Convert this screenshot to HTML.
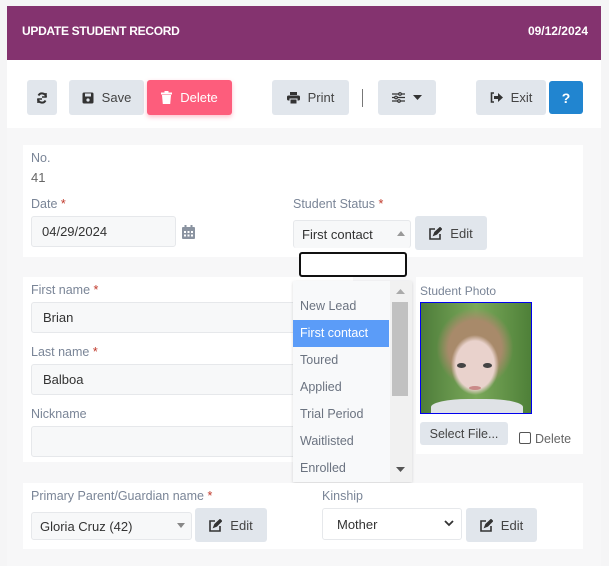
<!DOCTYPE html>
<html><head><style>
*{box-sizing:border-box;margin:0;padding:0}
body{width:609px;height:563px;overflow:hidden;background:#f5f5f6;font-family:"Liberation Sans",sans-serif;font-size:13px;color:#333;position:relative}
.a{position:absolute}
.card{left:7px;top:6px;width:594px;height:560px;background:#f7f7f8}
.hdr{left:7px;top:6px;width:594px;height:54px;background:#84336f;color:#fff;font-size:12px}
.tb{left:7px;top:60px;width:594px;height:68px;background:#fff}
.btn{position:absolute;background:#e1e6ec;border-radius:3px;color:#444;display:flex;align-items:center;justify-content:center;gap:8px;font-size:13px}
.sec{position:absolute;background:#fff}
.lbl{position:absolute;color:#7a8597;font-size:12.5px}
.req{color:#c0392b}
.inp{position:absolute;background:#f7f8f9;border:1px solid #e6e8eb;border-radius:3px;font-size:13px;color:#333;padding-left:11px;display:flex;align-items:center}
.it{position:absolute;left:0;width:96px;height:27px;line-height:27px;padding-left:7px;color:#6b7380;font-size:12.5px}
</style></head><body>
<div class="a card"></div>
<div class="a hdr"><span class="a" style="left:15px;top:18px;font-weight:bold;letter-spacing:-0.3px">UPDATE STUDENT RECORD</span><span class="a" style="right:13px;top:18px;font-weight:bold">09/12/2024</span></div>
<div class="a tb"></div>
<div class="btn" style="left:27px;top:80px;width:30px;height:35px"><svg width="12" height="12" viewBox="0 0 12 12" fill="none" stroke="#333" stroke-width="2"><path d="M10 5A4 4 0 0 0 2.5 3.5M2 7a4 4 0 0 0 7.5 1.5"/><path d="M10 1v4H6M2 11V7h4" stroke-width="1.5"/></svg></div>
<div class="btn" style="left:69px;top:80px;width:75px;height:35px"><svg width="12" height="12" viewBox="0 0 12 12"><rect x="0.5" y="0.5" width="11" height="11" rx="1.5" fill="#333"/><rect x="3" y="1.5" width="6" height="3" fill="#e1e6ec"/><circle cx="6" cy="8" r="1.6" fill="#e1e6ec"/></svg>Save</div>
<div class="btn" style="left:147px;top:80px;width:85px;height:35px;background:#fd5d7c;color:#fff;box-shadow:0 2px 5px rgba(253,93,124,.4)"><svg width="11" height="13" viewBox="0 0 11 13" fill="#fff"><rect x="0" y="1.5" width="11" height="2"/><rect x="3.5" y="0" width="4" height="2"/><path d="M1 4h9l-.8 9H1.8z"/></svg>Delete</div>
<div class="btn" style="left:272px;top:80px;width:77px;height:35px"><svg width="13" height="12" viewBox="0 0 13 12" fill="#333"><rect x="3" y="0" width="7" height="3"/><rect x="0" y="3.5" width="13" height="5" rx="1.5"/><rect x="3" y="7" width="7" height="5" fill="#333" stroke="#e1e6ec" stroke-width="1"/></svg>Print</div>
<div class="a" style="left:362px;top:89px;width:1px;height:18px;background:#777"></div>
<div class="btn" style="left:378px;top:80px;width:58px;height:35px"><svg width="13" height="11" viewBox="0 0 13 11" fill="none" stroke="#333" stroke-width="1.2"><path d="M0 2h13M0 5.5h13M0 9h13"/><circle cx="8" cy="2" r="1.3" fill="#e1e6ec"/><circle cx="4" cy="5.5" r="1.3" fill="#e1e6ec"/><circle cx="7" cy="9" r="1.3" fill="#e1e6ec"/></svg><svg width="9" height="5"><path d="M0 0h9L4.5 5z" fill="#333"/></svg></div>
<div class="btn" style="left:476px;top:80px;width:70px;height:35px"><svg width="13" height="11" viewBox="0 0 13 11" fill="#333"><path d="M4 1H1.5v9H4" fill="none" stroke="#333" stroke-width="1.6"/><path d="M4 4h4V1l5 4.5-5 4.5V7H4z"/></svg>Exit</div>
<div class="btn" style="left:549px;top:81px;width:34px;height:33px;background:#2185d0;color:#fff;font-weight:bold;font-size:14px">?</div>

<div class="sec" style="left:23px;top:145px;width:560px;height:112px"></div>
<div class="lbl" style="left:31px;top:151px">No.</div>
<div class="a" style="left:31px;top:170px;color:#666">41</div>
<div class="lbl" style="left:31px;top:197px">Date <span class="req">*</span></div>
<div class="inp" style="left:31px;top:216px;width:145px;height:31px;padding-left:10px">04/29/2024</div>
<svg class="a" style="left:182px;top:225px" width="13" height="14" viewBox="0 0 13 14" fill="#8a93a0"><rect x="0" y="2" width="13" height="12" rx="1"/><rect x="2.5" y="0" width="2" height="3"/><rect x="8.5" y="0" width="2" height="3"/><g fill="#fff"><rect x="2" y="6" width="2" height="2"/><rect x="5.5" y="6" width="2" height="2"/><rect x="9" y="6" width="2" height="2"/><rect x="2" y="9.5" width="2" height="2"/><rect x="5.5" y="9.5" width="2" height="2"/><rect x="9" y="9.5" width="2" height="2"/></g></svg>
<div class="lbl" style="left:293px;top:197px">Student Status <span class="req">*</span></div>
<div class="inp" style="left:293px;top:220px;width:118px;height:28px;padding-left:8px;border-bottom:none">First contact</div>
<svg class="a" style="left:397px;top:231px" width="8" height="5"><path d="M0 5h8L4 0z" fill="#999"/></svg>
<div class="btn" style="left:415px;top:216px;width:72px;height:34px"><svg width="13" height="13" viewBox="0 0 13 13" fill="none" stroke="#333" stroke-width="1.6"><path d="M6 2H1v10h10V7"/><path d="M5 8l1-2.5L11 .8l1.3 1.3L7.5 7z" fill="#333"/></svg>Edit</div>

<div class="sec" style="left:23px;top:277px;width:330px;height:185px"></div>
<div class="sec" style="left:416px;top:277px;width:167px;height:177px"></div>
<div class="lbl" style="left:31px;top:283px">First name <span class="req">*</span></div>
<div class="inp" style="left:31px;top:302px;width:266px;height:31px">Brian</div>
<div class="lbl" style="left:31px;top:345px">Last name <span class="req">*</span></div>
<div class="inp" style="left:31px;top:364px;width:266px;height:31px">Balboa</div>
<div class="lbl" style="left:31px;top:407px">Nickname</div>
<div class="inp" style="left:31px;top:426px;width:266px;height:31px"></div>

<div class="lbl" style="left:420px;top:284px;font-size:12px">Student Photo</div>
<div class="a" style="left:420px;top:302px;width:112px;height:112px;border:1px solid #0000ee;background:radial-gradient(ellipse 32px 40px at 54px 62px,#e9d2cc 60%,transparent 75%),radial-gradient(ellipse 48px 50px at 54px 45px,#a88a6a 55%,transparent 80%),linear-gradient(90deg,#4e7d3a,#7aa85a 50%,#4e8038);overflow:hidden">
<div class="a" style="left:36px;top:60px;width:9px;height:5px;border-radius:50%;background:#444"></div>
<div class="a" style="left:62px;top:60px;width:9px;height:5px;border-radius:50%;background:#444"></div>
<div class="a" style="left:48px;top:83px;width:12px;height:4px;border-radius:50%;background:#c98a88"></div>
<div class="a" style="left:10px;top:96px;width:92px;height:20px;border-radius:40% 40% 0 0;background:#dfe2e6"></div></div>
<div class="btn" style="left:420px;top:422px;width:88px;height:23px;font-size:12.5px">Select File...</div>
<div class="a" style="left:519px;top:432px;width:12px;height:12px;border:1px solid #555;border-radius:2px;background:#fff"></div>
<div class="a" style="left:535px;top:432px;color:#666;font-size:12.5px">Delete</div>

<div class="a" style="left:299px;top:252px;width:108px;height:25px;border:2px solid #111;border-radius:3px;background:#fff"></div>
<div class="a" style="left:293px;top:281px;width:119px;height:201px;background:#f8f9fa;box-shadow:0 1px 3px rgba(0,0,0,.15)">
<div class="it" style="top:12px">New Lead</div>
<div class="it" style="top:39px;background:#5b9cf8;color:#fff">First contact</div>
<div class="it" style="top:66px">Toured</div>
<div class="it" style="top:93px">Applied</div>
<div class="it" style="top:120px">Trial Period</div>
<div class="it" style="top:147px">Waitlisted</div>
<div class="it" style="top:174px">Enrolled</div>
<div class="a" style="left:97px;top:0;width:22px;height:201px;background:#f1f1f1"></div>
<svg class="a" style="left:103px;top:8px" width="9" height="5"><path d="M0 5h9L4.5 0z" fill="#aaa"/></svg>
<div class="a" style="left:99px;top:21px;width:16px;height:94px;background:#c1c1c1"></div>
<svg class="a" style="left:103px;top:186px" width="9" height="5"><path d="M0 0h9L4.5 5z" fill="#555"/></svg>
</div>

<div class="sec" style="left:23px;top:483px;width:560px;height:66px"></div>
<div class="lbl" style="left:31px;top:489px">Primary Parent/Guardian name <span class="req">*</span></div>
<div class="inp" style="left:31px;top:512px;width:161px;height:28px;padding-left:8px">Gloria Cruz (42)</div>
<svg class="a" style="left:177px;top:523px" width="8" height="5"><path d="M0 0h8L4 5z" fill="#888"/></svg>
<div class="btn" style="left:195px;top:508px;width:72px;height:34px"><svg width="13" height="13" viewBox="0 0 13 13" fill="none" stroke="#333" stroke-width="1.6"><path d="M6 2H1v10h10V7"/><path d="M5 8l1-2.5L11 .8l1.3 1.3L7.5 7z" fill="#333"/></svg>Edit</div>
<div class="lbl" style="left:322px;top:489px">Kinship</div>
<div class="inp" style="left:322px;top:508px;width:140px;height:32px;padding-left:14px;background:#fff">Mother</div>
<svg class="a" style="left:444px;top:520px" width="10" height="7"><path d="M1 1l4 4 4-4" fill="none" stroke="#333" stroke-width="1.8"/></svg>
<div class="btn" style="left:466px;top:508px;width:71px;height:34px"><svg width="13" height="13" viewBox="0 0 13 13" fill="none" stroke="#333" stroke-width="1.6"><path d="M6 2H1v10h10V7"/><path d="M5 8l1-2.5L11 .8l1.3 1.3L7.5 7z" fill="#333"/></svg>Edit</div>
</body></html>
